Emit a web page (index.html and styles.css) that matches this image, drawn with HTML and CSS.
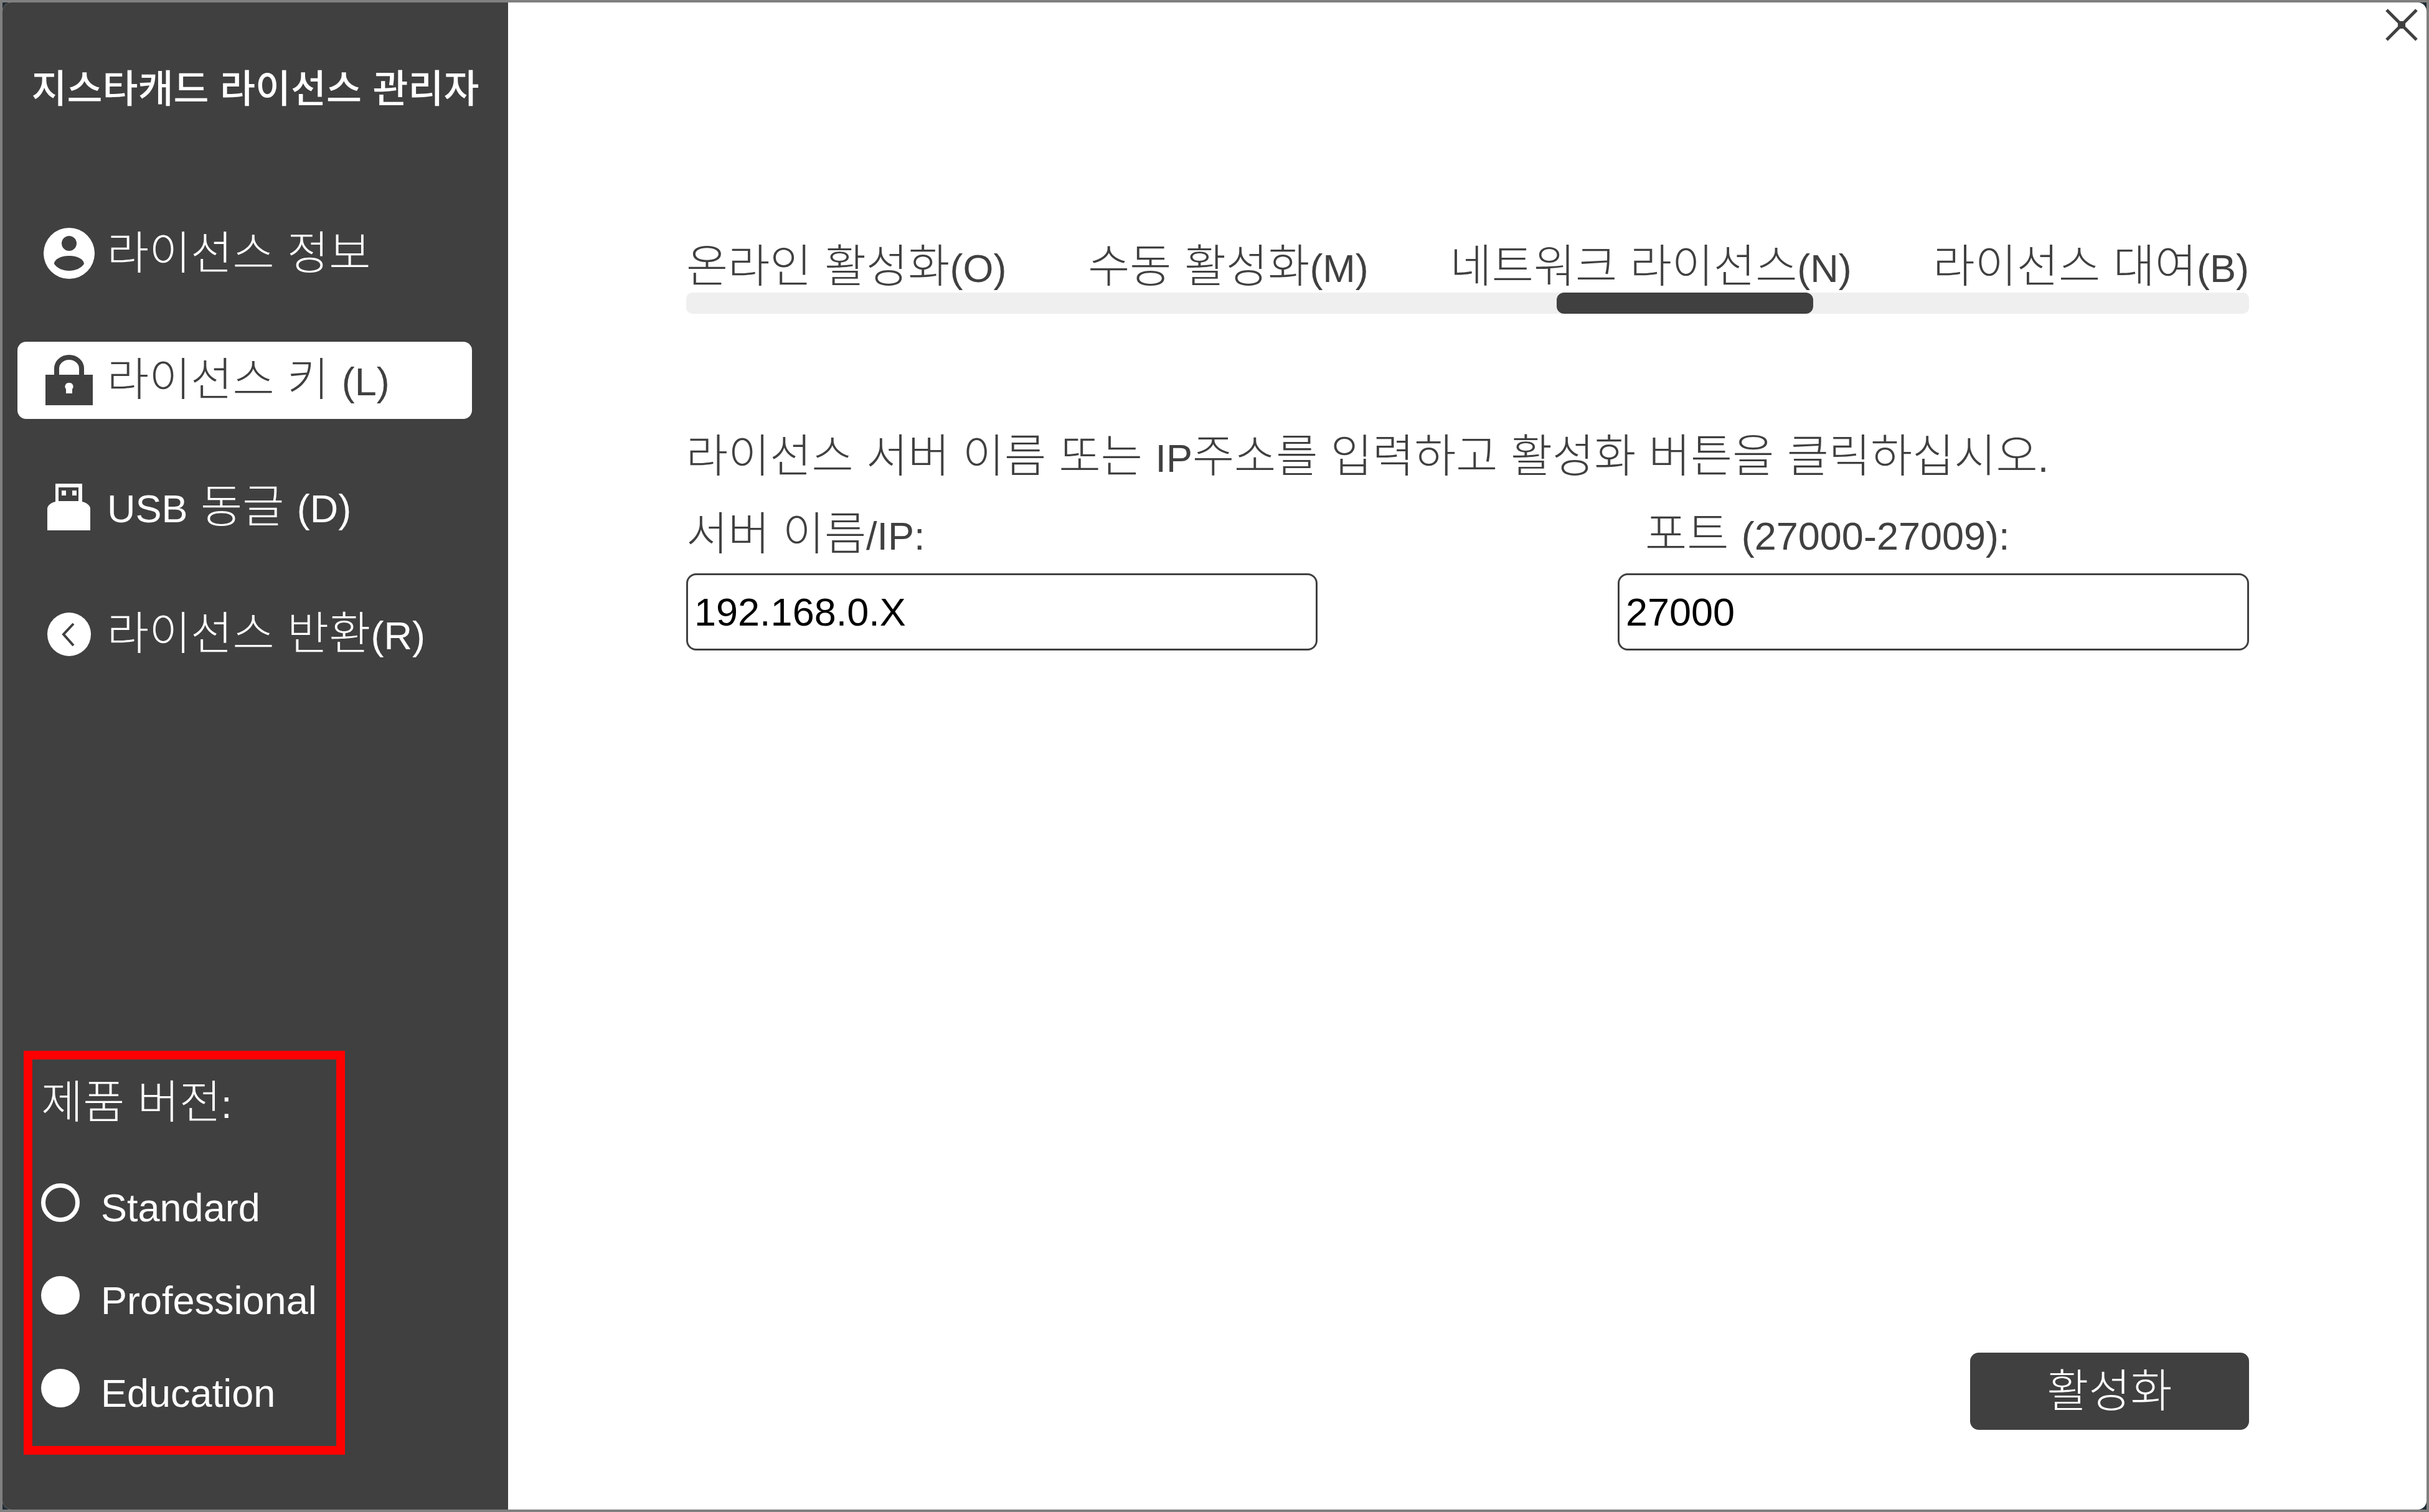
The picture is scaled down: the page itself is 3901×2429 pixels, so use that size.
FILE: index.html
```html
<!DOCTYPE html>
<html lang="ko">
<head>
    <meta charset="UTF-8">
    <meta name="viewport" content="width=device-width, initial-scale=1.0">
    <title>지스타캐드 라이선스 관리자</title>
    <link rel="stylesheet" href="styles.css">
</head>
<body>

    <div class="window">
        <div class="sidebar">
            <h1>지스타캐드 라이선스 관리자</h1>

            <nav class="menu">
                <a href="#">
                    <svg viewBox="0 0 82 82"><path fill="currentColor" fill-rule="evenodd" d="M41 0a41 41 0 1 0 0 82a41 41 0 1 0 0-82zM41 13a12 12 0 0 1 12 12a12 12 0 0 1-24 0a12 12 0 0 1 12-12zM41 45c14 0 24 6 24 13c-5 7-14 11-24 11s-19-4-24-11c0-7 10-13 24-13z"/></svg>
                    <span class="name">라이선스 정보</span>
                </a>
                <a href="#" class="selected">
                    <svg viewBox="0 0 82 82"><path fill="none" stroke="currentColor" stroke-width="8" d="M21 33V22a20 18 0 0 1 40 0v11"/><path fill="currentColor" fill-rule="evenodd" d="M3 32h76v49H3zM41 45a6 6 0 0 0-5 10v7h10v-7a6 6 0 0 0-5-10z"/></svg>
                    <span class="name">라이선스 키 <span class="en">(L)</span></span>
                </a>
                <a href="#">
                    <svg viewBox="0 0 82 82"><path fill="currentColor" fill-rule="evenodd" d="M19 3h43v29c6 1 13 6 13 11v35H6V43c0-5 7-10 13-11zM24 9v22h32V9zM29 14h7v8h-7zM46 14h7v8h-7z"/></svg>
                    <span class="name"><span class="en">USB</span> 동글 <span class="en">(D)</span></span>
                </a>
                <a href="#">
                    <svg viewBox="0 0 82 82"><circle cx="41" cy="41" r="35" fill="currentColor"/><path fill="none" stroke="#404040" stroke-width="4" d="M48 24L32 41l16 18"/></svg>
                    <span class="name">라이선스 반환<span class="en">(R)</span></span>
                </a>
            </nav>

            <fieldset class="version">
                <legend>제품 버전<span class="en">:</span></legend>
                <label><input type="radio" name="version" value="standard" checked> <span>Standard</span></label>
                <label><input type="radio" name="version" value="professional"> <span>Professional</span></label>
                <label><input type="radio" name="version" value="education"> <span>Education</span></label>
            </fieldset>
        </div>

        <div class="content">
            <button type="button" class="close" aria-label="닫기">
                <svg viewBox="0 0 52 52"><path fill="none" stroke="#404040" stroke-width="5" d="M2 2l48 48M50 2L2 50"/><path fill="#404040" d="M20 20h12v12H20z"/></svg>
            </button>

            <nav class="tabs">
                <a href="#">온라인 활성화<span class="en">(O)</span></a>
                <a href="#">수동 활성화<span class="en">(M)</span></a>
                <a href="#">네트워크 라이선스<span class="en">(N)</span></a>
                <a href="#">라이선스 대여<span class="en">(B)</span></a>
            </nav>
            <div class="track"><div class="marker"></div></div>

            <form class="server">
                <p>라이선스 서버 이름 또는 <span class="en">IP</span>주소를 입력하고 활성화 버튼을 클릭하십시오<span class="en">.</span></p>
                <div class="fields">
                    <div class="field">
                        <label for="host">서버 이름<span class="en">/IP:</span></label>
                        <input type="text" id="host" value="192.168.0.X">
                    </div>
                    <div class="field port">
                        <label for="port">포트 <span class="en">(27000-27009):</span></label>
                        <input type="text" id="port" value="27000">
                    </div>
                </div>
                <button type="submit" class="activate">활성화</button>
            </form>
        </div>
    </div>

</body>
</html>
```

FILE: styles.css
```css
* {
    box-sizing: border-box;
}

body {
    margin: 0;
    min-height: 100vh;
    display: flex;
    border: 4px solid #808080;
    background-color: #1f2a33;
    font-family: "Noto Sans CJK KR", sans-serif;
    font-size: 73px;
    font-weight: 300;
    line-height: 80px;
    color: #404040;
}

a {
    color: inherit;
    text-decoration: none;
}

/* Latin letters and digits are set smaller than the Korean text */
.en {
    font-family: "Liberation Sans", Arial, sans-serif;
    font-size: 63px;
    font-weight: 400;
    line-height: 64px;
}

.window {
    flex: 1;
    display: flex;
    border-radius: 14px;
    overflow: hidden;
    background-color: white;
}

.sidebar {
    flex: 0 0 812px;
    display: flex;
    flex-direction: column;
    background-color: #404040;
    color: white;
    padding: 94px 24px 88px;
}

h1 {
    margin: 0 0 167px;
    font-size: 62px;
    font-weight: 500;
    line-height: 80px;
    text-align: center;
    white-space: nowrap;
}

.menu {
    display: flex;
    flex-direction: column;
    gap: 80px;
    margin-right: 34px;
}

.menu a {
    display: flex;
    align-items: center;
    gap: 20px;
    height: 124px;
    padding-left: 42px;
    border-radius: 14px;
    white-space: nowrap;
}

.menu svg {
    width: 82px;
    height: 82px;
}

.menu .name {
    padding-bottom: 14px;
}

.menu .selected {
    background-color: white;
    color: #404040;
}

.version {
    width: 516px;
    margin: auto 0 0 10px;
    padding: 22px 14px 45px;
    border: 14px solid red;
    display: flex;
    flex-direction: column;
    gap: 69px;
}

.version legend {
    float: left;
    padding: 0;
    margin-bottom: 25px;
}

.version label {
    display: flex;
    align-items: center;
    gap: 34px;
    height: 80px;
    font-family: "Liberation Sans", Arial, sans-serif;
    font-size: 63px;
    font-weight: 400;
}

.version input {
    appearance: none;
    width: 62px;
    height: 62px;
    margin: 0 0 16px;
    border-radius: 50%;
    background-color: white;
}

.version input:checked {
    background-color: transparent;
    border: 7px solid white;
}

.content {
    flex: 1;
    display: flex;
    flex-direction: column;
    position: relative;
    padding: 377px 285px 128px 286px;
}

.close {
    position: absolute;
    top: 10px;
    right: 14px;
    padding: 0;
    border: none;
    background: none;
    cursor: pointer;
}

.close svg {
    display: block;
    width: 52px;
    height: 52px;
}

.tabs {
    display: flex;
    justify-content: space-between;
    margin-bottom: 7px;
    white-space: nowrap;
}

.track {
    height: 34px;
    border-radius: 10px;
    background-color: #efefef;
}

.marker {
    width: 16.4%;
    height: 100%;
    margin-left: 55.7%;
    border-radius: 12px;
    background-color: #404040;
}

.server {
    flex: 1;
    display: flex;
    flex-direction: column;
    margin-top: 182px;
}

.server p {
    margin: 0 0 43px;
}

.fields {
    display: flex;
    justify-content: space-between;
}

.field {
    width: 40.4%;
    display: flex;
    flex-direction: column;
    gap: 28px;
}

.port label {
    padding-left: 44px;
}

.field input {
    width: 100%;
    height: 124px;
    padding: 0 10px;
    border: 3px solid #404040;
    border-radius: 16px;
    background-color: white;
    color: black;
    font-family: "Liberation Sans", Arial, sans-serif;
    font-size: 63px;
}

.activate {
    align-self: flex-end;
    width: 448px;
    height: 124px;
    margin-top: auto;
    padding: 0 0 14px;
    border: none;
    border-radius: 14px;
    background-color: #404040;
    color: white;
    font: inherit;
    cursor: pointer;
}
```
